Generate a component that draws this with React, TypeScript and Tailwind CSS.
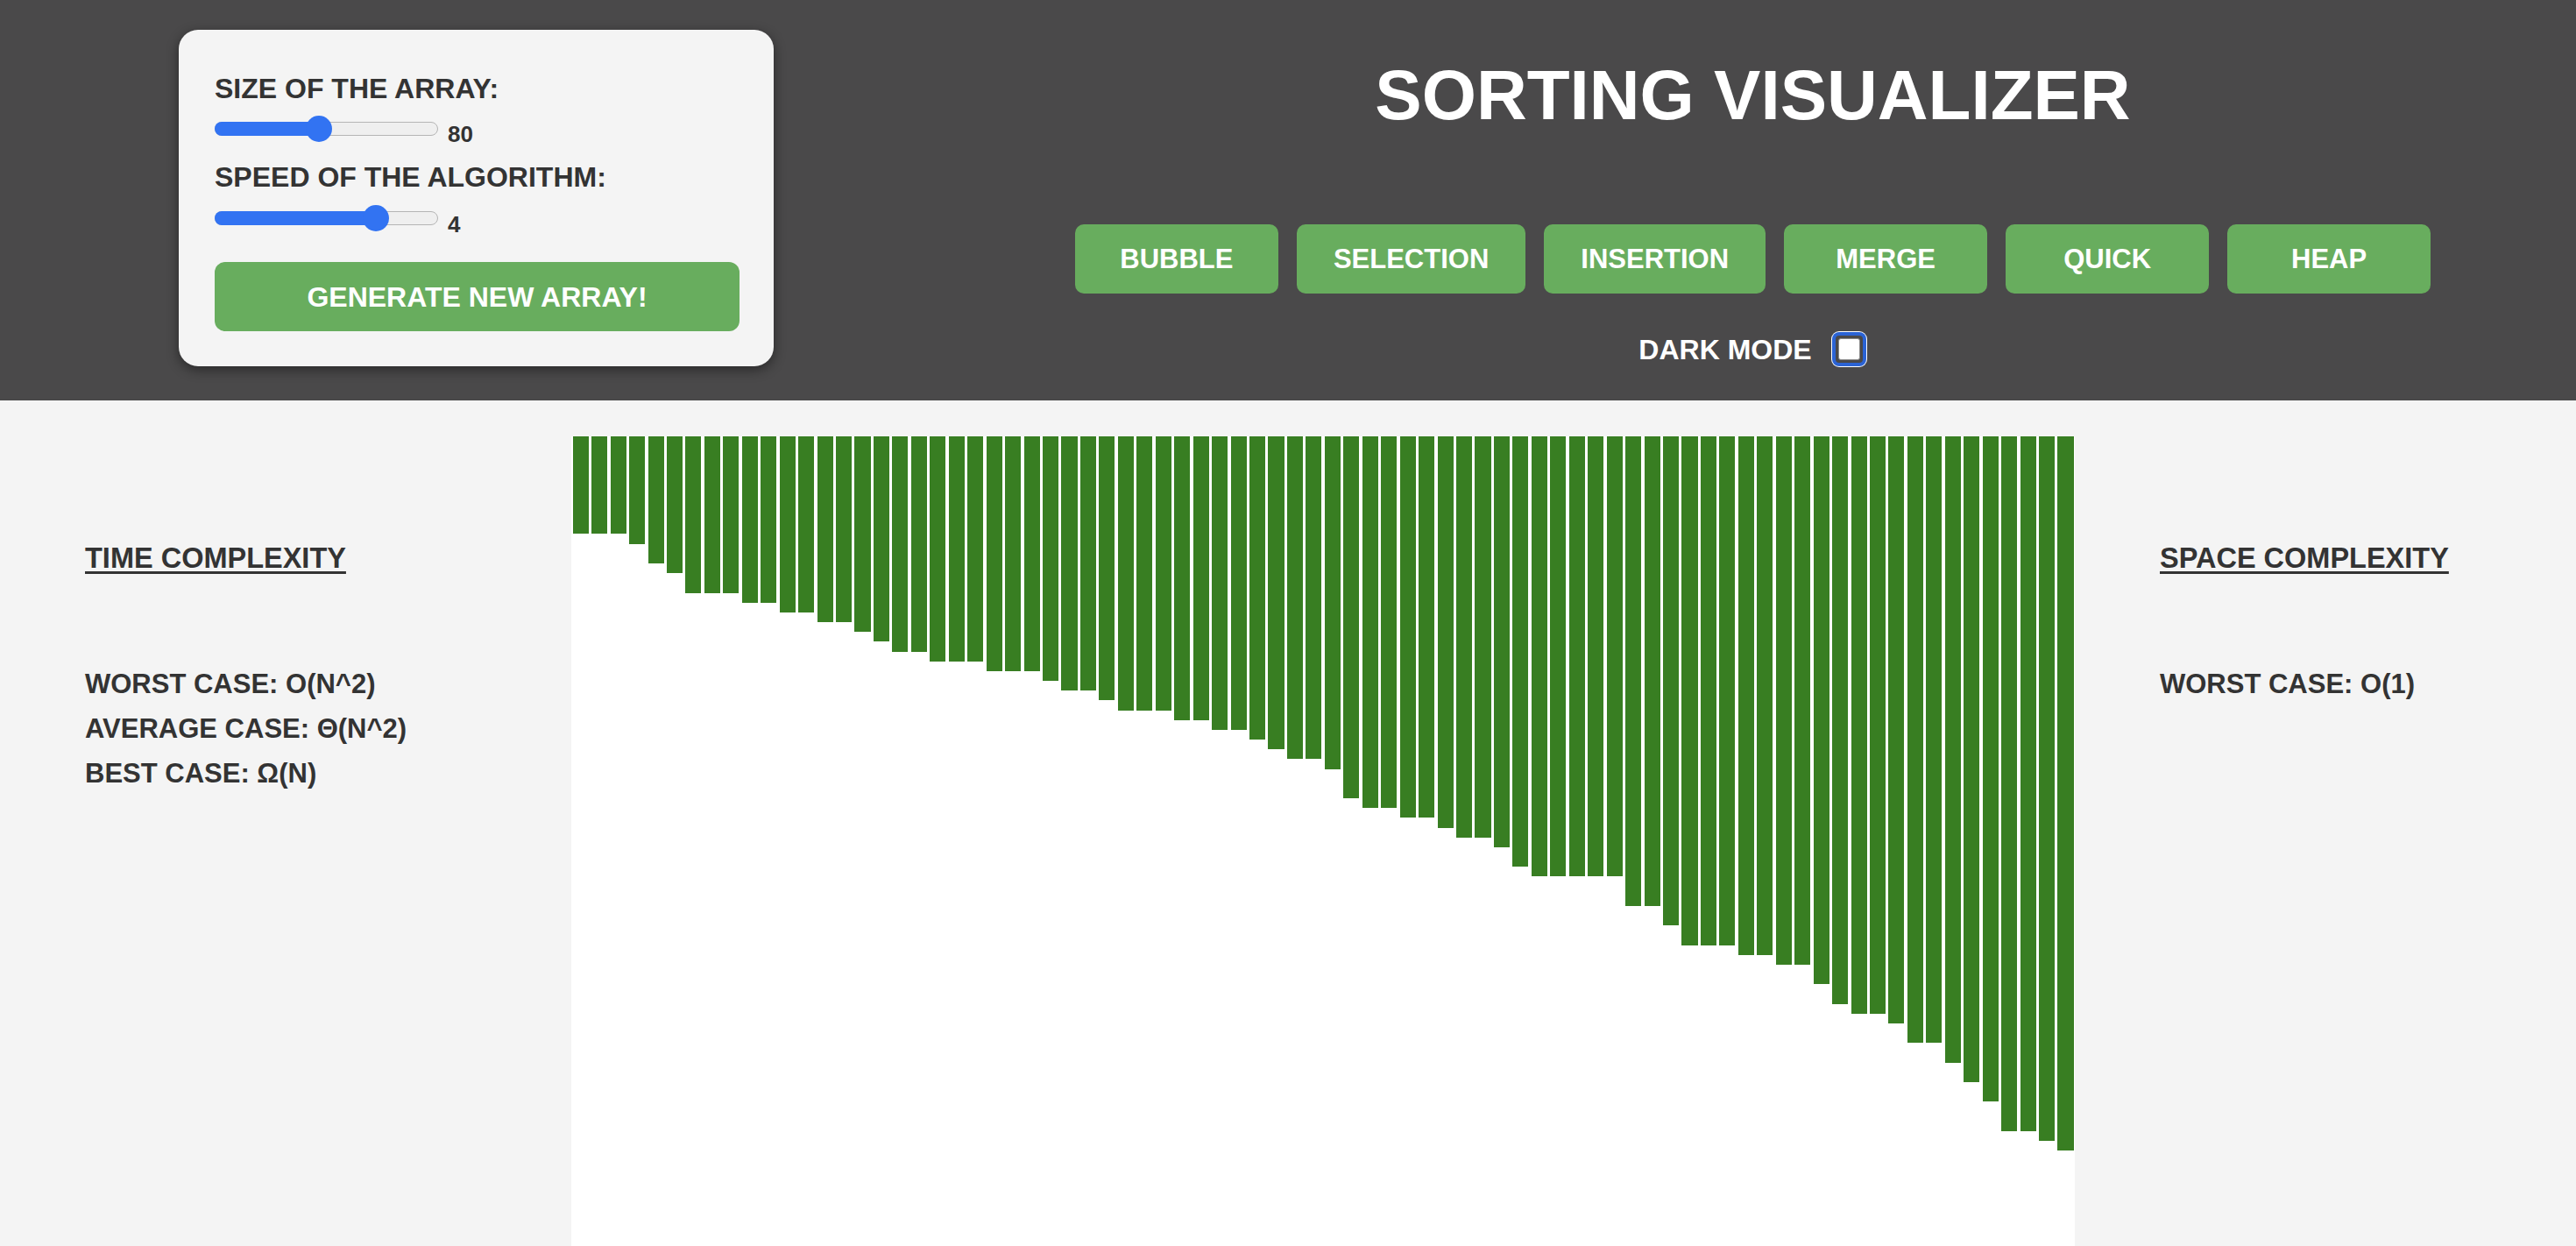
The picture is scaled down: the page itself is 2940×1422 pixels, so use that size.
import React from "react";

const HEIGHTS = [
  111, 111, 111, 123, 145, 156, 179, 179, 179, 190, 190, 201, 201, 212, 212, 223, 234, 246, 246, 257,
  257, 257, 268, 268, 268, 279, 290, 290, 301, 313, 313, 313, 324, 324, 335, 335, 346, 357, 368, 368,
  380, 413, 424, 424, 435, 435, 447, 458, 458, 469, 491, 502, 502, 502, 502, 502, 536, 536, 558, 581,
  581, 581, 592, 592, 603, 603, 625, 648, 659, 659, 670, 692, 692, 715, 737, 759, 793, 793, 804, 815,
];

const ALGOS = ["BUBBLE", "SELECTION", "INSERTION", "MERGE", "QUICK", "HEAP"];

function Slider({ fraction }: { fraction: number }) {
  const center = 15 + fraction * 225;
  return (
    <div className="relative w-[255px] h-[30px] shrink-0">
      <div className="absolute left-0 right-0 top-[7px] h-[16px] rounded-full bg-[#efefef] border border-[#b5b5b5]" />
      <div
        className="absolute left-0 top-[7px] h-[16px] rounded-l-full bg-[#3273f2]"
        style={{ width: center }}
      />
      <div
        className="absolute top-0 w-[30px] h-[30px] rounded-full bg-[#3273f2]"
        style={{ left: center - 15 }}
      />
    </div>
  );
}

export default function App() {
  return (
    <div className="min-h-screen bg-[#f4f4f4] font-['Liberation_Sans',Arial,sans-serif] font-bold text-[#333]">
      {/* Header */}
      <div className="h-[457px] bg-[#4a494a] flex items-start">
        <div className="ml-[204px] mt-[34px] w-[679px] h-[384px] rounded-[22px] bg-[#f4f4f4] shadow-[0_4px_14px_rgba(0,0,0,0.45)] pl-[41px] pt-[51px] flex flex-col">
          <div className="text-[32px] leading-none">SIZE OF THE ARRAY:</div>
          <div className="mt-[15px] flex items-start">
            <Slider fraction={0.462} />
            <div className="ml-[11px] mt-[8px] text-[26px] leading-none">80</div>
          </div>
          <div className="mt-[20px] text-[32px] leading-none">SPEED OF THE ALGORITHM:</div>
          <div className="mt-[16px] flex items-start">
            <Slider fraction={0.75} />
            <div className="ml-[11px] mt-[9px] text-[26px] leading-none">4</div>
          </div>
          <button className="mt-[30px] w-[599px] h-[79px] rounded-[12px] bg-[#68ad5e] text-white text-[32px] leading-none flex items-center justify-center">
            GENERATE NEW ARRAY!
          </button>
        </div>

        <div className="flex-1 pl-[178px] flex flex-col items-center">
          <div className="mt-[69px] text-[80px] leading-none text-white">SORTING VISUALIZER</div>
          <div className="mt-[107px] flex gap-[21px]">
            {ALGOS.map((a) => (
              <button
                key={a}
                className="h-[79px] min-w-[232px] px-[42px] rounded-[10px] bg-[#68ad5e] text-white text-[31px] leading-none flex items-center justify-center"
              >
                {a}
              </button>
            ))}
          </div>
          <div className="mt-[43px] flex items-center gap-[22px]">
            <span className="text-[32px] leading-none text-white">DARK MODE</span>
            <div className="w-[41px] h-[41px] rounded-[9px] bg-white p-[1px]">
              <div className="w-full h-full rounded-[8px] bg-[#2b63d4] p-[4px]">
                <div className="w-full h-full rounded-[4px] bg-[#4a494a] p-[3px]">
                  <div className="w-full h-full rounded-[3px] bg-white border border-[#8a8a8a]" />
                </div>
              </div>
            </div>
          </div>
        </div>
      </div>

      {/* Main */}
      <div className="mt-[41px] flex items-start">
        <div className="w-[652px] shrink-0 pl-[97px] pt-[123px]">
          <div className="text-[32.5px] leading-none underline decoration-[3px] underline-offset-[4px]">TIME COMPLEXITY</div>
          <div className="mt-[101px] text-[31px] leading-[51px]">
            <div>WORST CASE: O(N^2)</div>
            <div>AVERAGE CASE: Θ(N^2)</div>
            <div>BEST CASE: Ω(N)</div>
          </div>
        </div>

        <div className="w-[1716px] shrink-0 h-[924px] bg-white flex items-start">
          {HEIGHTS.map((h, i) => (
            <div key={i} className="flex-1 mx-[1.7px] bg-[#387e22]" style={{ height: h }} />
          ))}
        </div>

        <div className="flex-1 pl-[97px] pt-[123px]">
          <div className="text-[32.5px] leading-none underline decoration-[3px] underline-offset-[4px]">SPACE COMPLEXITY</div>
          <div className="mt-[101px] text-[31px] leading-[51px]">
            <div>WORST CASE: O(1)</div>
          </div>
        </div>
      </div>
    </div>
  );
}
